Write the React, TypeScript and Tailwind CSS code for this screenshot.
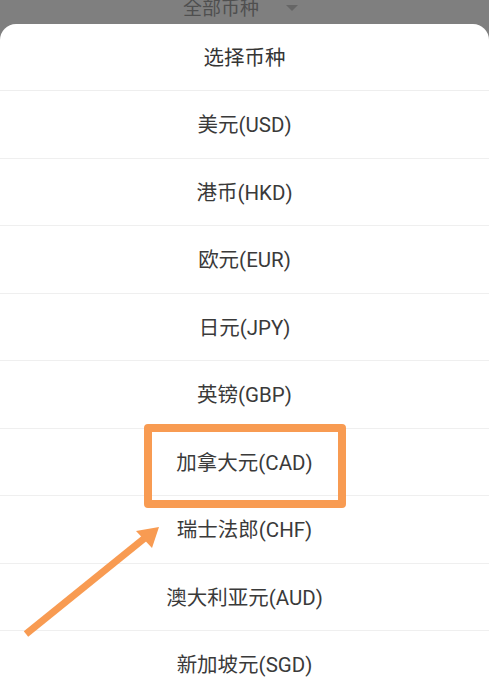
import React from "react";

const currencies = [
  "美元(USD)",
  "港币(HKD)",
  "欧元(EUR)",
  "日元(JPY)",
  "英镑(GBP)",
  "加拿大元(CAD)",
  "瑞士法郎(CHF)",
  "澳大利亚元(AUD)",
  "新加坡元(SGD)",
];

const font = { fontFamily: '"Roboto", "Noto Sans CJK SC", sans-serif' };

export default function App() {
  return (
    <div className="relative w-full h-[696px] overflow-hidden bg-[#7f7f7f] flex flex-col" style={font}>
      {/* page behind the dimmed backdrop */}
      <div className="h-[24px] shrink-0 overflow-hidden">
        <div className="-mt-[5px] flex items-center justify-center gap-[27px] pr-[8px] text-[19px] leading-[28px] text-[#4f4f4f]">
          <span>全部币种</span>
          <span className="mt-[-2px] w-0 h-0 border-l-[6px] border-r-[6px] border-t-[6px] border-l-transparent border-r-transparent border-t-[#666666]" />
        </div>
      </div>

      {/* bottom sheet */}
      <div className="flex-1 bg-white rounded-t-[16px] flex flex-col">
        <div className="h-[67px] shrink-0 flex items-center justify-center pt-[3px] border-b border-[#eeeeee] text-[20.5px] text-[#353535]">
          选择币种
        </div>
        {currencies.map((c) => (
          <div
            key={c}
            className="h-[67.5px] shrink-0 flex items-center justify-center pt-[3px] border-b border-[#efefef] text-[20.5px] text-[#3a3a3a]"
          >
            {c}
          </div>
        ))}
      </div>

      {/* annotation: highlight box */}
      <div className="absolute left-[144px] top-[424px] w-[202px] h-[84px] border-[8px] border-[#f89b52] rounded-[4px]" />

      {/* annotation: arrow */}
      <svg className="absolute left-0 top-0" width="489" height="696" viewBox="0 0 489 696">
        <line x1="26" y1="634" x2="146" y2="537" stroke="#f89b52" strokeWidth="7" strokeLinecap="butt" />
        <polygon points="159,527 136,531 152,548" fill="#f89b52" />
      </svg>
    </div>
  );
}
